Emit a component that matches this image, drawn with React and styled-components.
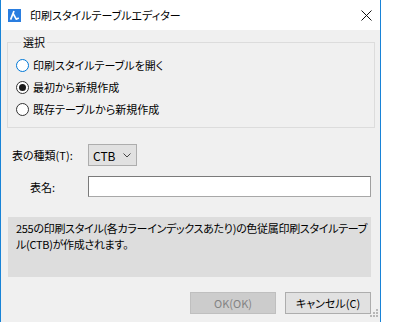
import React from "react";
import styled, { createGlobalStyle } from "styled-components";

const Global = createGlobalStyle`
  html, body { margin: 0; padding: 0; background: #ffffff; }
  body {
    font-family: "Noto Sans CJK JP", "Noto Sans", sans-serif;
    font-size: 11px;
    color: #000;
    font-feature-settings: "palt";
  }
  * { box-sizing: border-box; }
`;

const Window = styled.div`
  position: relative;
  width: 381px;
  height: 322px;
  background: #f0f0f0;
  border-left: 1px solid #1883d7;
  border-right: 1px solid #1883d7;
  overflow: hidden;
`;

const TitleBar = styled.div`
  height: 30px;
  background: #ffffff;
  display: flex;
  align-items: center;
  padding: 0 8px 0 7px;
`;

const TitleText = styled.div`
  margin-left: 9px;
  font-size: 11px;
  line-height: 14px;
  flex: 1;
`;

const Body = styled.div`
  padding: 0 9px 0 6px;
`;

const Group = styled.fieldset`
  margin: 5px -4px 0 0;
  padding: 5px 0 7px 8px;
  border: 1px solid #dcdcdc;
  display: flex;
  flex-direction: column;
`;

const Legend = styled.legend`
  margin-left: 5px;
  padding: 0 2px;
  line-height: 14px;
`;

const RadioRow = styled.label`
  display: flex;
  align-items: center;
  height: 22px;
  gap: 4px;
  line-height: 14px;
`;

const RadioCircle = styled.span`
  width: 13px;
  height: 13px;
  border-radius: 50%;
  background: #fff;
  border: 1px solid ${(p) => (p.$focus ? "#0078d7" : "#333333")};
  display: flex;
  align-items: center;
  justify-content: center;
  flex: none;
  &::after {
    content: "";
    width: 7px;
    height: 7px;
    border-radius: 50%;
    background: #1a1a1a;
    display: ${(p) => (p.$checked ? "block" : "none")};
  }
`;

const Form = styled.div`
  margin-top: 16px;
  padding-left: 5px;
  display: grid;
  grid-template-columns: 76px 1fr;
  row-gap: 10px;
  align-items: center;
`;

const FieldLabel = styled.div`
  padding-left: ${(p) => p.$indent || 0}px;
  line-height: 14px;
`;

const Select = styled.div`
  width: 49px;
  height: 22px;
  background: #e1e1e1;
  border: 1px solid #adadad;
  display: flex;
  align-items: center;
  justify-content: space-between;
  padding: 0 5px 0 4px;
  font-size: 12px;
`;

const TextInput = styled.div`
  height: 21px;
  background: #ffffff;
  border: 1px solid #7a7a7a;
  border-bottom-color: #a8a8a8;
  border-right-color: #a0a0a0;
`;

const InfoPanel = styled.div`
  margin: 20px 0 0 1px;
  height: 60px;
  background: #dddddd;
  padding: 3px 8px;
  line-height: 16px;
  letter-spacing: -0.3px;
`;

const Line = styled.div`
  white-space: nowrap;
`;

const Buttons = styled.div`
  margin-top: 15px;
  display: flex;
  justify-content: flex-end;
  gap: 9px;
`;

const Button = styled.div`
  width: 86px;
  height: 22px;
  display: flex;
  align-items: center;
  justify-content: center;
  line-height: 14px;
  background: ${(p) => (p.$disabled ? "#cccccc" : "#e1e1e1")};
  border: 1px solid ${(p) => (p.$disabled ? "#bfbfbf" : "#adadad")};
  color: ${(p) => (p.$disabled ? "#838383" : "#000000")};
`;

const Grip = styled.svg`
  position: absolute;
  left: 369px;
  top: 309px;
`;

const AppIcon = () => (
  <svg width="13" height="13" viewBox="0 0 13 13">
    <rect width="13" height="13" fill="#2a7ee0" />
    <path
      d="M6 2 L2.6 10.6 M5.2 4.6 L8.2 10.2 L10.8 9"
      stroke="#fff"
      strokeWidth="1.7"
      fill="none"
      strokeLinejoin="round"
    />
  </svg>
);

const CloseIcon = () => (
  <svg width="11" height="11" viewBox="0 0 11 11">
    <path d="M0.5 0.5 L10.5 10.5 M10.5 0.5 L0.5 10.5" stroke="#111" strokeWidth="1" />
  </svg>
);

const Chevron = () => (
  <svg width="8" height="5" viewBox="0 0 8 5">
    <path d="M0.5 0.5 L4 4 L7.5 0.5" stroke="#444" strokeWidth="1" fill="none" />
  </svg>
);

export default function App() {
  return (
    <>
      <Global />
      <Window>
        <TitleBar>
          <AppIcon />
          <TitleText>印刷スタイルテーブルエディター</TitleText>
          <CloseIcon />
        </TitleBar>
        <Body>
          <Group>
            <Legend>選択</Legend>
            <RadioRow>
              <RadioCircle $focus />
              印刷スタイルテーブルを開く
            </RadioRow>
            <RadioRow>
              <RadioCircle $checked />
              最初から新規作成
            </RadioRow>
            <RadioRow>
              <RadioCircle />
              既存テーブルから新規作成
            </RadioRow>
          </Group>
          <Form>
            <FieldLabel>表の種類(T):</FieldLabel>
            <Select>
              CTB
              <Chevron />
            </Select>
            <FieldLabel $indent={18}>表名:</FieldLabel>
            <TextInput />
          </Form>
          <InfoPanel>
            <Line>255の印刷スタイル(各カラーインデックスあたり)の色従属印刷スタイルテーブ</Line>
            <Line>ル(CTB)が作成されます。</Line>
          </InfoPanel>
          <Buttons>
            <Button $disabled>OK(OK)</Button>
            <Button>キャンセル(C)</Button>
          </Buttons>
        </Body>
        <Grip width="9" height="9" viewBox="0 0 9 9">
          <g fill="#b8b8b8">
            <rect x="6" y="0" width="2" height="2" />
            <rect x="3" y="3" width="2" height="2" />
            <rect x="6" y="3" width="2" height="2" />
            <rect x="0" y="6" width="2" height="2" />
            <rect x="3" y="6" width="2" height="2" />
            <rect x="6" y="6" width="2" height="2" />
          </g>
        </Grip>
      </Window>
    </>
  );
}
